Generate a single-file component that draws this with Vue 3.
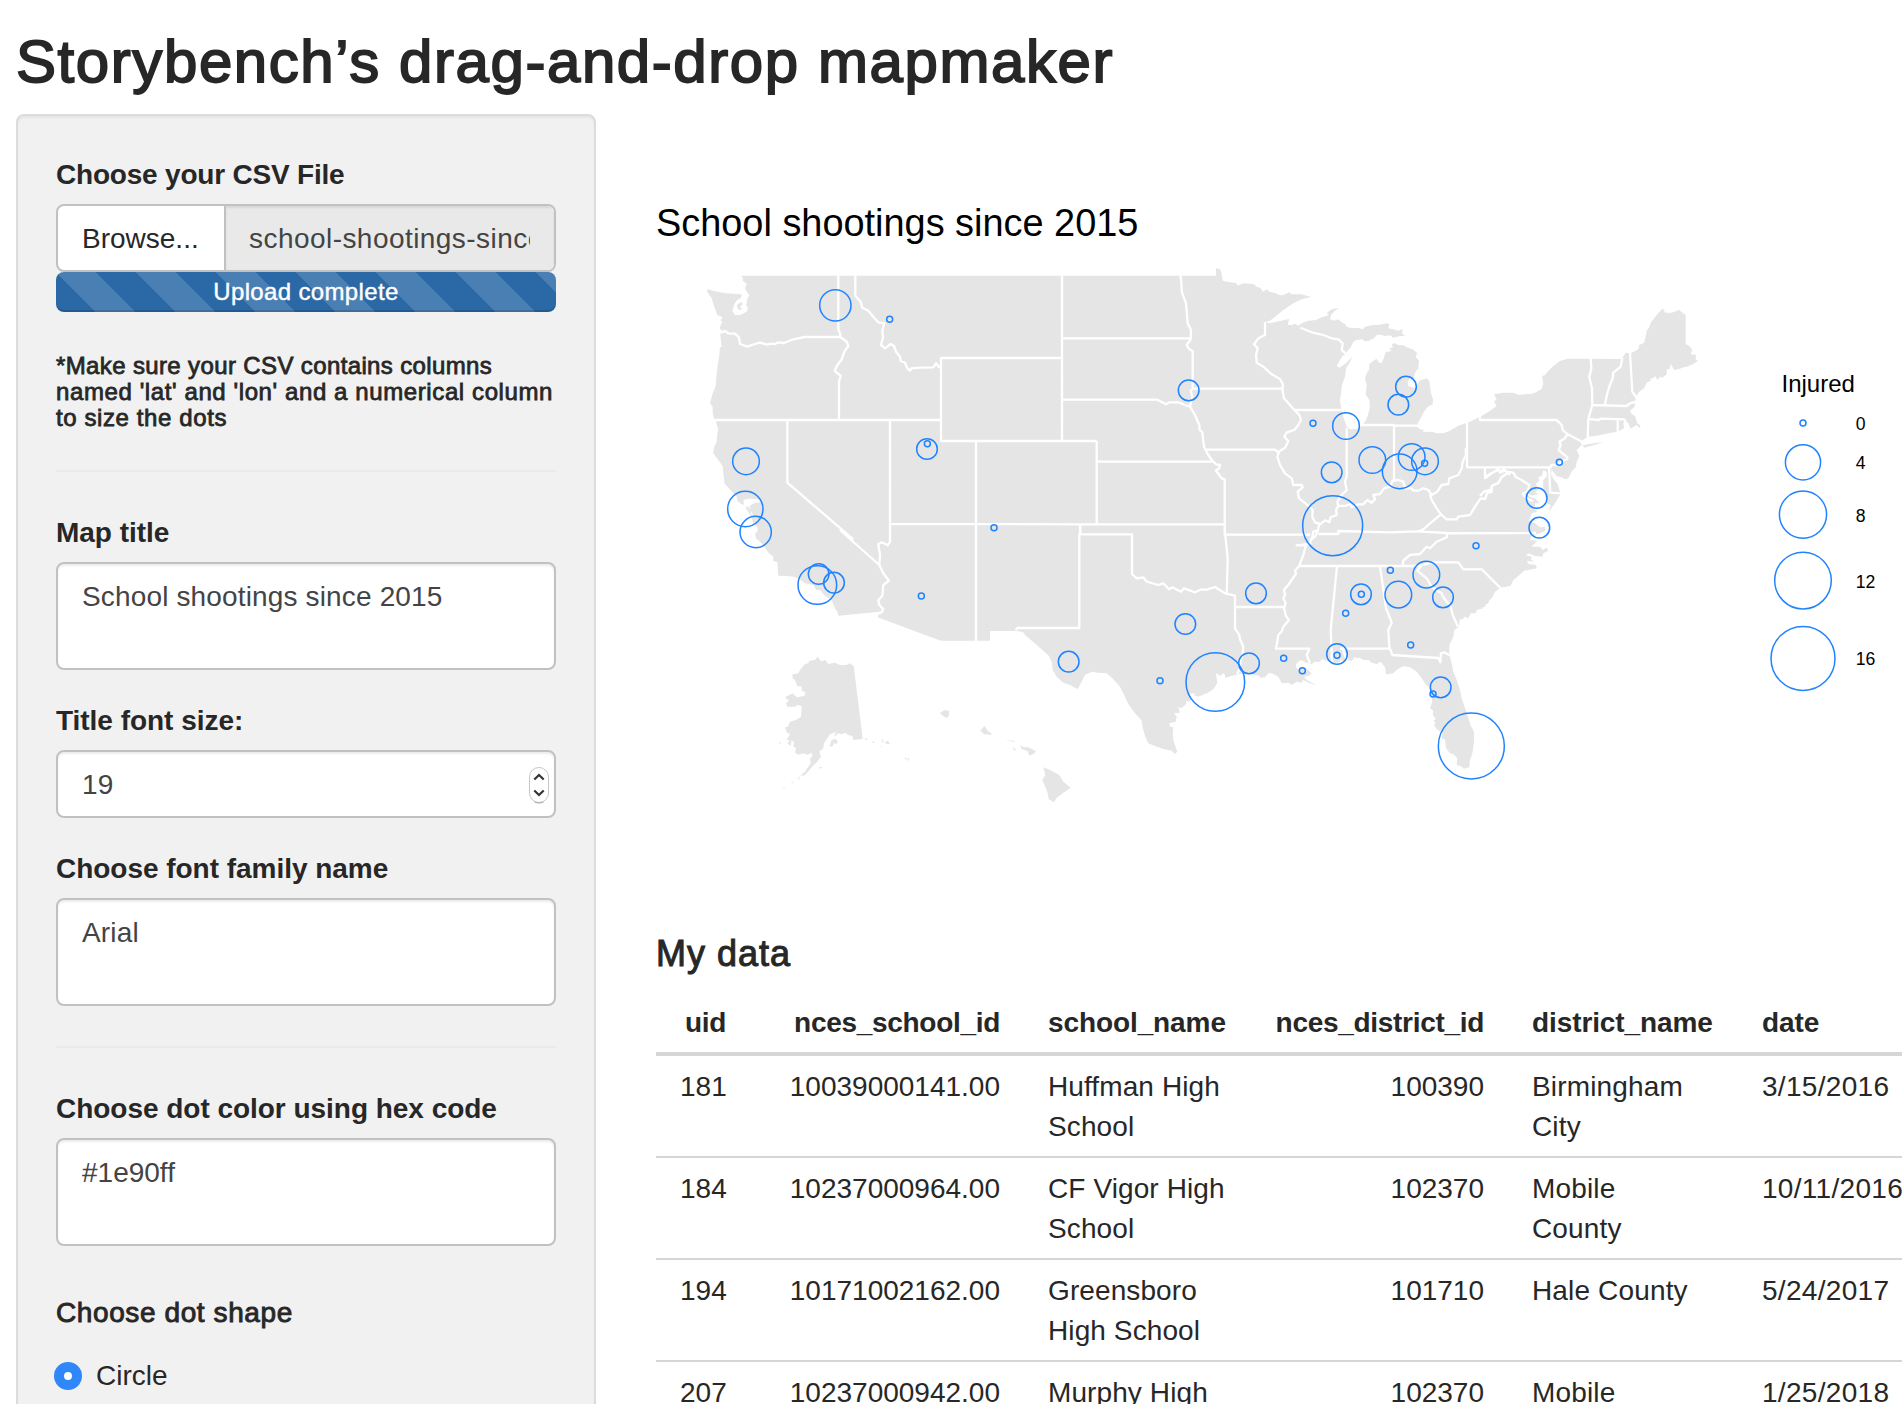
<script setup>
import { ref } from 'vue'

const title = ref('School shootings since 2015')
const fontSize = ref(19)
const family = ref('Arial')
const dotColor = ref('#1e90ff')

// Map geometry is kept per tile: each tile has an origin, and its points are in thirds of a unit.
const tiles = {
  A: [690, 260], B: [960, 260], C: [1230, 260], D: [1480, 290],
  E: [690, 530], F: [980, 530], G: [1260, 530]
}
const pts = (tile, text) => text.trim().split(/\s+/).map((p) => {
  const [x, y] = p.split(',').map(Number)
  return `${(tiles[tile][0] + x / 3).toFixed(1)} ${(tiles[tile][1] + y / 3).toFixed(1)}`
}).join('L')

const mainland = 'M' + [
  pts('A', '52,87 68,92 98,98 125,101 145,101 156,105 152,114 141,121 133,133 127,153 135,165 150,165 163,159 172,153 173,141 168,136 171,128 170,120 178,106 170,95 165,85 170,72 158,62 158,54 153,47 840,47'),
  pts('B', '768,47 768,25 780,27 785,42 788,62 805,66 828,69 833,75'),
  pts('C', '22,77 40,70 70,72 80,80 92,84 98,95 112,88 118,95 135,99 150,106 160,105 178,97 185,103 215,103 235,109 245,110 215,118 190,130 160,150 135,170 120,182 106,186 120,190 150,183 178,177 173,194 185,195 195,191 205,197 215,190 235,182 258,180 275,172 298,165 290,159 305,148 327,143 315,152 303,165 300,178 312,182 325,178 335,187 345,192 350,200 360,203 385,204 398,208 405,200 430,195 450,194 472,190 478,193 475,205 490,208 505,212 518,207 516,220 526,227 510,228 490,233 480,226 462,228 455,224 440,225 432,235 415,243 402,243 398,238 380,240 370,245 362,262 355,270 345,283 338,287 328,303 320,318 328,323 345,312 352,305 367,290 358,310 348,325 345,350 336,375 333,400 330,420 333,445 338,465 345,485 350,500 360,508 380,507 395,497 408,480 415,462 420,440 418,420 407,403 410,375 405,355 410,340 417,330 418,312 430,302 440,296 447,308 455,308 462,293 465,280 470,275 485,274 478,265 489,262 485,252 495,250 505,255 520,256 530,262 548,268 562,280 557,290 567,302 565,325 555,338 552,355 540,355 533,365 535,378 552,384 560,378 568,362 590,355 598,363 603,400 609,418 608,433 593,440 580,458 572,475 563,490 560,500 570,508 582,510 578,516 605,515 620,520 640,520 660,512 685,497 720,485 750,470 780,453 793,443'),
  pts('D', '50,347 42,335 50,328 42,313 70,308 100,308 115,314 150,312 165,308 185,297 190,280 186,258 195,255 205,243 220,228 240,213 262,206 330,206 425,207 437,188 450,190 462,185 475,178 478,165 492,158 496,145 500,122 508,112 512,98 530,75 548,55 556,68 575,68 597,60 617,75 617,162 628,168 637,180 632,192 648,195 647,207 654,213 640,222 620,230 610,232 600,236 582,240 573,222 568,238 560,238 560,253 547,263 540,260 533,270 525,258 518,266 512,264 512,272 500,278 492,295 478,305 467,320 466,335 464,350 450,362 455,372 465,378 472,400 482,408 478,414 470,405 452,416 445,400 435,392 430,398 432,415 412,425 385,430 350,437 325,440 312,448 300,460 307,463 290,480 298,497 290,515 288,530 275,545 265,565 255,568 245,562 230,558 215,540 213,552 222,570 232,580 240,605 240,615 225,640 207,665 212,645 200,640 203,630 195,622 202,608 190,605 190,570 200,560 200,546 190,541 186,557 175,562 178,573 168,580 173,600 166,605 175,612 155,617 142,610 148,620 165,625 180,640 165,640 165,650 155,650 172,665 155,670 150,688 145,690 165,700 180,712 195,710 197,722 180,730 155,737 150,750 170,752 155,770 180,770 188,780 200,773 205,782 190,790 188,800 165,798 145,790 138,796 155,800 153,808 162,815 140,812 145,822 168,825 170,835 145,840 132,842 115,858 100,870 92,887 62,893 45,905 35,925 20,935 15,950 3,955'),
  pts('G', '705,187 690,207 683,222 675,222 670,235 650,240 648,250 632,250 625,265 614,260 605,270 600,265 597,290 583,300 580,320 568,345 568,375 575,400 580,425 590,450 600,480 605,505 615,535 625,565 633,588 642,605 642,640 637,670 630,690 628,712 612,716 602,708 590,705 592,685 580,672 570,670 558,655 555,628 545,625 548,608 530,598 522,585 527,580 520,572 528,567 518,555 520,542 510,535 517,515 512,490 508,470 500,467 485,445 470,425 450,412 430,408 410,420 400,430 378,433 375,412 362,395 350,402 335,398 325,390 310,390 300,383 290,385 285,380 275,392 260,390 255,397 240,388 242,395 232,398 215,400 200,392 185,388 180,396 165,395 155,402 140,398 122,390 108,402 108,412 115,420 130,412 138,415 155,430 146,437 132,440 140,450 172,467 150,460 130,450 125,458 110,455 95,465 85,458 65,460 55,440 35,430 25,430 15,442 0,443'),
  pts('F', '838,437 810,432 795,428 778,432 755,438 735,443 735,433 728,430 722,438 708,430 712,460 700,478 680,490 655,500 640,495 648,488 628,492 632,508 630,515 618,512 618,522 605,535 595,532 600,548 582,550 590,560 587,575 568,580 570,590 580,592 578,610 580,630 588,655 592,665 585,672 575,662 550,657 525,648 505,640 495,618 490,600 484,570 465,550 445,522 430,490 420,470 400,448 380,430 355,428 335,425 315,435 305,455 293,477 270,465 250,458 230,440 218,420 215,395 207,378 190,362 170,345 150,328 135,315 130,307 110,303 30,303 30,332 0,332'),
  pts('E', '752,332 563,262 570,245 445,257 442,243 436,238 425,210 405,198 390,180 378,180 370,165 345,160 325,146 312,140 290,138 265,137 262,97 250,93 250,80 235,68 222,48 210,35 198,25 195,12 203,3'),
  pts('A', '203,803 190,790 182,768 168,745 170,737 184,750 182,762 190,768 178,738 195,728 210,727 205,718 175,716 160,720 162,735 150,730 142,722 140,710 105,672 103,665 100,640 98,618 85,600 70,580 72,562 80,545 82,520 85,510 78,485 72,475 68,460 68,440 60,430 68,400 77,378 80,340 84,310 88,285 90,262 95,262 90,215 97,212 88,205 97,185 90,180 97,176 95,170 82,165 73,140 65,115 52,97')
].join('L') + 'Z'

const shape = (tile, text) => 'M' + pts(tile, text) + 'Z'
const islands = [
  shape('A', '140,135 155,125 158,133 150,140 157,148 145,150'),
  shape('D', '308,466 345,459 370,457 340,466 312,473'),
  shape('E', '383,380 375,390 358,392 355,400 345,402 330,420 325,430 307,433 308,445 315,450 322,468 335,470 335,482 347,487 343,498 320,502 308,490 285,502 297,512 288,520 292,530 315,530 322,525 335,528 333,560 318,570 300,575 293,590 285,592 290,605 285,605 300,612 290,630 300,632 292,640 302,648 305,630 312,637 310,650 318,653 315,668 325,674 340,670 352,674 365,668 367,680 360,685 362,700 345,725 325,742 330,746 350,730 365,712 383,693 393,680 388,665 400,655 402,640 420,613 438,605 432,620 445,610 455,613 465,608 475,615 487,618 490,630 518,627 491,408 478,400 470,405 450,405 435,398 415,402 406,390 393,394'),
  shape('E', '425,630 435,626 443,634 440,642 432,640 427,650 418,648'),
  shape('E', '265,640 270,636 273,641'), shape('E', '302,759 312,754 308,760'),
  shape('E', '278,776 285,770 283,776'), shape('E', '322,745 335,735 340,738 328,748'),
  shape('E', '523,627 533,625 530,631'), shape('E', '545,632 557,638 550,640'),
  shape('E', '575,624 581,635 577,638'), shape('E', '585,637 594,632 600,642 588,641'),
  shape('E', '568,647 575,650 570,651'), shape('E', '640,681 650,686 648,690'),
  shape('E', '652,685 657,684 657,697'), shape('E', '387,711 397,711 392,717'),
  shape('E', '750,550 755,545 765,540 777,543 777,558 768,564 760,558'),
  shape('E', '870,600 876,598 884,588 891,600 903,614 884,613'),
  shape('F', '0,600 6,598 12,588 20,600 35,611 33,616 25,612 12,613'),
  shape('F', '75,630 105,633 103,636'), shape('F', '98,652 108,658 103,663'),
  shape('F', '120,645 130,652 145,652 168,664 163,670 148,677 143,664 125,657'),
  shape('F', '190,712 215,722 238,735 250,755 272,773 245,792 230,803 222,817 206,808 202,785 187,750 196,735'),
  shape('E', '283,169 288,169 287,172')
].join('')

const line = (tile, text) => 'M' + pts(tile, text)
const borders = [
  line('A', '445,44 445,208 450,220 452,232 470,245 475,258 463,275 455,298 440,318 434,332 442,340 452,347 447,365 447,480'),
  line('A', '88,217 97,217 105,213 115,220 135,221 147,232 150,252 172,260 195,252 210,248 232,254 242,251 255,252 265,247 282,249 310,238 345,231 450,231'),
  line('A', '74,480 753,480'),
  line('A', '496,44 496,107 512,125 517,143 535,152 550,170 565,187 583,190 577,212 579,232 573,255 585,265 602,252 612,258 618,275 630,290 632,303 645,308 652,325 660,332 664,325 690,323 730,322 738,310 748,322 753,324'),
  line('A', '753,480 753,294 1116,294'), line('A', '753,480 753,543 1220,543'),
  line('A', '292,480 292,668 490,838'), line('A', '600,480 600,848'),
  line('A', '600,792 1170,793 1604,793'),
  line('B', '48,543 48,840'), line('B', '306,44 306,543'), line('B', '306,235 692,235'),
  line('B', '306,418 592,419 605,426 618,433 628,427 655,427 675,435 690,440'),
  line('B', '410,543 410,793'), line('B', '410,605 757,605'),
  line('B', '661,44 664,65 665,95 678,130 683,190 693,210 692,238 680,255 688,268 698,273 698,386 692,392 697,410 690,440 705,465 718,495 719,510 727,517 732,560 742,580 755,600 768,613 780,615 778,624 768,632 785,655 794,658 794,826'),
  line('B', '698,386 968,386'), line('B', '737,569 945,569 955,578'),
  line('B', '360,793 360,822'), line('B', '794,824 1050,824'),
  line('C', '105,186 105,225 85,235 72,253 83,265 78,285 80,308 100,320 125,343 150,357 158,372 158,395 162,415 180,435 193,450 208,465 213,480 205,495 193,510 170,517 163,530 175,543 165,563 148,574 142,590 150,615 165,640 185,655 190,675 215,675 218,682 203,695 207,715 230,733 248,750 247,770 255,787 268,791 263,812 250,815 245,840'),
  line('C', '193,450 334,450'), line('C', '350,505 350,650 345,665 350,690 335,705 322,725 325,740'),
  line('C', '388,495 492,495 492,665'), line('C', '492,497 562,497'),
  line('C', '255,787 270,793 285,781 298,787 302,772 320,765 318,750 325,737 345,738 360,732 365,742 385,733 400,733 412,720 425,728 435,717 430,705 450,702 462,685 480,680 488,662 505,660 520,665 525,685 545,685 550,692 565,692 580,685 595,690 605,705 622,695 635,675 655,672 658,655 685,645 695,625 698,605 708,585 707,565'),
  line('C', '711,483 711,622 960,622'), line('C', '600,703 605,720 620,745 633,763 650,778 680,778 685,770 720,765 735,740 752,715 765,717 775,690 785,695 785,678 805,668 815,650 835,638'),
  line('C', '765,622 765,655 785,640 805,628 810,638 825,632 840,645'),
  line('C', '633,763 600,790 580,808 560,816'), line('C', '265,822 325,822 325,813 480,817 560,814 650,819 840,820'),
  line('C', '211,203 245,217 280,225 305,235 325,238 338,250 335,270 347,280'),
  line('C', '750,468 750,480 980,480 995,495'),
  line('D', '228,390 245,405 248,420 262,432 309,457'),
  line('D', '262,432 255,445 238,455 242,465 236,480 262,502 262,507 245,513 235,525 215,525 207,533'),
  line('D', '0,532 215,532'), line('D', '207,532 211,608 242,610'),
  line('D', '332,204 334,235 328,262 336,295 337,345 325,388 323,442'),
  line('D', '427,204 422,230 400,248 398,265 388,290 382,310 375,343'),
  line('D', '337,345 440,348 450,340 468,335'), line('D', '450,187 457,305 469,322'),
  line('D', '328,387 358,390 360,386 433,388 440,402'), line('D', '413,390 413,427'),
  line('D', '15,532 15,562 33,550 55,540 60,545 72,538 80,545 100,548 108,562 125,570 148,585 143,603 128,612 140,625 160,634'),
  line('D', '0,618 15,602 30,608 35,588 55,580 65,562 75,555 84,545'),
  line('G', '562,10 828,9'),
  line('E', '568,105 450,0'), line('E', '600,0 600,35 593,46 575,37 565,42 570,75 568,105 580,130 597,152 580,165 577,198 565,210 568,225 580,238 575,247 565,250'),
  line('E', '858,-10 858,334'),
  line('F', '107,300 112,294 298,294 298,13 456,13 456,132 470,145 490,142 500,155 535,165 550,160 567,178 577,172 603,185 612,175 645,187 665,178 680,179 705,171 735,190 765,197 765,295 778,315 780,328 790,350 788,375 782,390 780,412 772,432'),
  line('F', '734,0 743,85 740,192'), line('F', '301,-17 301,13'), line('F', '765,231 912,231'),
  line('F', '736,-8 733,-2'),
  line('G', '175,0 165,20 153,28 150,42 110,46 138,46 130,75 118,107 105,122 108,132 98,145 85,165 72,180 75,195 70,205 77,220 72,235 78,258 87,270 70,290 65,305 55,315 50,345 48,356 148,356 140,375 150,400'),
  line('G', '118,108 475,108 520,97 595,97 610,118 665,118 722,175'),
  line('G', '231,108 212,300 216,398'), line('G', '360,108 378,235 390,265 395,278 385,300 388,350 397,375 535,384 541,397 543,370 553,367 568,376'),
  line('G', '240,356 390,356'), line('G', '250,356 252,370 262,392'),
  line('G', '485,106 472,122 500,145 515,172 545,190 550,202 572,230 578,255 594,290'),
  line('G', '428,105 430,92 450,75 480,72 500,50 510,55 530,35 560,22 562,9')
].join('')

const dotData = [
  ['A', 436, 136, 47], ['A', 599, 178, 9], ['A', 711, 567, 31], ['A', 712, 551, 9], ['A', 168, 604, 40],
  ['A', 166, 747, 53], ['A', 197, 816, 47], ['B', 686, 391, 31], ['B', 102, 803, 9], ['C', 528, 380, 31],
  ['C', 505, 434, 31], ['C', 249, 490, 9], ['C', 348, 498, 40], ['C', 305, 637, 31], ['C', 427, 600, 40],
  ['C', 509, 634, 52], ['C', 545, 591, 40], ['C', 585, 604, 40], ['C', 584, 610, 9], ['C', 308, 797, 90],
  ['D', 238, 517, 9], ['D', 170, 624, 31], ['D', 178, 713, 31], ['E', 382, 165, 58], ['E', 386, 132, 31],
  ['E', 432, 158, 31], ['E', 694, 198, 9], ['F', 266, 395, 31], ['F', 616, 282, 31], ['F', 540, 452, 9],
  ['F', 706, 456, 88], ['F', 807, 400, 31], ['F', 828, 190, 31], ['G', 71, 385, 9], ['G', 127, 422, 9],
  ['G', 231, 372, 31], ['G', 231, 376, 9], ['G', 303, 193, 31], ['G', 304, 193, 9], ['G', 257, 250, 9],
  ['G', 391, 121, 9], ['G', 415, 194, 40], ['G', 499, 134, 40], ['G', 549, 202, 31], ['G', 452, 345, 9],
  ['G', 648, 47, 9], ['G', 542, 472, 31], ['G', 519, 492, 9], ['G', 634, 648, 99]
]
const dots = dotData.map(([t, x, y, r]) => ({ x: tiles[t][0] + x / 3, y: tiles[t][1] + y / 3, r: r / 3 }))

const legend = [
  { label: 0, y: 423, r: 3 },
  { label: 4, y: 462.3, r: 17.6 },
  { label: 8, y: 514.6, r: 23.6 },
  { label: 12, y: 580.6, r: 28.3 },
  { label: 16, y: 658.4, r: 32 }
]

const columns = [
  { key: 'uid', width: 94, num: true },
  { key: 'nces_school_id', width: 274, num: true },
  { key: 'school_name', width: 226 },
  { key: 'nces_district_id', width: 258, num: true },
  { key: 'district_name', width: 230 },
  { key: 'date', width: 199 }
]
const rows = [
  ['181', '10039000141.00', 'Huffman High School', '100390', 'Birmingham City', '3/15/2016'],
  ['184', '10237000964.00', 'CF Vigor High School', '102370', 'Mobile County', '10/11/2016'],
  ['194', '10171002162.00', 'Greensboro High School', '101710', 'Hale County', '5/24/2017'],
  ['207', '10237000942.00', 'Murphy High School', '102370', 'Mobile County', '1/25/2018']
]
</script>

<template>
  <div class="page">
    <h2 class="page-title">Storybench’s drag-and-drop mapmaker</h2>
    <div class="layout">
      <form class="well">
        <label class="label tight">Choose your CSV File</label>
        <div class="file-group">
          <span class="browse">Browse...</span>
          <div class="file-name"><span>school-shootings-since-2015.csv</span></div>
        </div>
        <div class="progress">Upload complete</div>
        <h6 class="note"><span>*Make sure your CSV contains columns</span> named 'lat' and 'lon' and a numerical column to size the dots</h6>
        <hr />
        <label class="label">Map title</label>
        <div class="control area">{{ title }}</div>
        <label class="label">Title font size:</label>
        <div class="control number">
          <span>{{ fontSize }}</span>
          <svg class="spinner" width="22" height="40" viewBox="0 0 22 40">
            <rect x="1.5" y="2.5" width="19" height="35" rx="9.5" fill="#fff" stroke="#c6c6c6" />
            <path d="M6.5 37.2Q11 39 15.5 37.2" fill="none" stroke="#aaa" />
            <path d="M6.3 14.5L11 10L15.7 14.5M6.3 25.5L11 30L15.7 25.5" fill="none" stroke="#333" stroke-width="2.2" />
          </svg>
        </div>
        <label class="label">Choose font family name</label>
        <div class="control area">{{ family }}</div>
        <hr />
        <label class="label">Choose dot color using hex code</label>
        <div class="control area hex">{{ dotColor }}</div>
        <h5 class="shape-title">Choose dot shape</h5>
        <div class="radio"><i class="radio-mark"></i><span>Circle</span></div>
      </form>

      <main class="main">
        <svg class="plot" width="1246" height="820" viewBox="656 114 1246 820">
          <text class="plot-title" x="656" y="236">{{ title }}</text>
          <path class="land" :d="mainland" />
          <path class="land" :d="islands" />
          <path class="borders" :d="borders" />
          <circle v-for="(d, i) in dots" :key="i" class="dot" :cx="d.x" :cy="d.y" :r="d.r" />
          <text class="legend-title" x="1781.5" y="391.7">Injured</text>
          <g v-for="l in legend" :key="l.label">
            <circle class="dot" cx="1803" :cy="l.y" :r="l.r" />
            <text class="legend-label" x="1855.8" :y="l.y + 7">{{ l.label }}</text>
          </g>
        </svg>
        <h4 class="data-title">My data</h4>
        <table class="data">
          <colgroup>
            <col v-for="c in columns" :key="c.key" :style="{ width: c.width + 'px' }" />
          </colgroup>
          <thead>
            <tr><th v-for="c in columns" :key="c.key" :class="{ num: c.num }">{{ c.key }}</th></tr>
          </thead>
          <tbody>
            <tr v-for="r in rows" :key="r[0]">
              <td v-for="(v, i) in r" :key="i" :class="{ num: columns[i].num }">{{ v }}</td>
            </tr>
          </tbody>
        </table>
      </main>
    </div>
  </div>
</template>

<style>
body { margin: 0; background: #fff; }
</style>

<style scoped>
.page {
  box-sizing: border-box;
  width: 1902px;
  height: 1404px;
  padding: 29px 0 0 16px;
  overflow: hidden;
  display: flex;
  flex-direction: column;
  font-family: "Liberation Sans", Arial, sans-serif;
  font-size: 28px;
  line-height: 40px;
  color: #272727;
}
h2, h4, h5, h6 { margin: 0; font-weight: 400; }
.page-title {
  margin-bottom: 19px;
  font-size: 60px;
  line-height: 66px;
  letter-spacing: 1.58px;
  white-space: nowrap;
  -webkit-text-stroke: 1.8px #272727;
}
.layout { display: flex; align-items: flex-start; gap: 60px; }
.well {
  box-sizing: border-box;
  flex: none;
  width: 580px;
  height: 1400px;
  padding: 38px;
  border: 2px solid #dcdcdc;
  border-radius: 8px;
  background: #f1f1f1;
  box-shadow: inset 0 2px 2px rgba(0, 0, 0, .05);
}
.label {
  display: block;
  height: 39px;
  padding-top: 1px;
  margin-bottom: 10px;
  font-weight: 700;
  letter-spacing: -.03px;
}
.tight { letter-spacing: -.2px; }
.file-group {
  display: flex;
  box-sizing: border-box;
  height: 68px;
  border: 2px solid #c1c1c1;
  border-radius: 8px;
  overflow: hidden;
  background: #fff;
}
.browse {
  box-sizing: border-box;
  flex: none;
  width: 168px;
  padding: 13px 0 0 24px;
  border-right: 2px solid #c1c1c1;
}
.file-name {
  flex: 1;
  min-width: 0;
  padding: 13px 24px 0 23px;
  background: #e9e9e9;
  box-shadow: inset 0 2px 2px rgba(0, 0, 0, .075);
  color: #444;
}
.file-name span { display: block; overflow: hidden; white-space: nowrap; letter-spacing: .45px; }
.progress {
  height: 40px;
  border-radius: 8px;
  background-color: #2a69a6;
  background-image: linear-gradient(45deg, rgba(255, 255, 255, .15) 25%, transparent 25%, transparent 50%, rgba(255, 255, 255, .15) 50%, rgba(255, 255, 255, .15) 75%, transparent 75%);
  background-size: 80px 80px;
  box-shadow: inset 0 -2px 0 rgba(0, 0, 0, .15);
  color: #fff;
  font-size: 24px;
  letter-spacing: .35px;
  text-align: center;
  -webkit-text-stroke: .4px #fff;
}
.note {
  margin-top: 41px;
  font-size: 24px;
  line-height: 26px;
  letter-spacing: .6px;
  -webkit-text-stroke: .8px #272727;
}
.note span { letter-spacing: .37px; }
hr { margin: 40px 0; border: 0; border-top: 2px solid #e9e9e9; }
.note + hr { margin-top: 39px; }
.control {
  box-sizing: border-box;
  height: 68px;
  margin-bottom: 30px;
  padding: 13px 23px 11px 24px;
  border: 2px solid #c1c1c1;
  border-radius: 8px;
  background: #fff;
  box-shadow: inset 0 2px 2px rgba(0, 0, 0, .075);
  color: #444;
  letter-spacing: .15px;
}
.area { height: 108px; }
.number { display: flex; justify-content: space-between; padding-right: 4px; }
.spinner { margin-top: 0; }
.hex { letter-spacing: 0; }
.shape-title {
  margin: 51px 0 28px;
  line-height: 31px;
  letter-spacing: .6px;
  font-size: 28px;
  -webkit-text-stroke: .9px #272727;
}
.radio { display: flex; gap: 14px; margin-left: -2px; }
.radio-mark {
  box-sizing: border-box;
  width: 28px;
  height: 28px;
  margin-top: 6px;
  border: 10px solid #3087fa;
  border-radius: 50%;
  background: #fff;
}
.main { flex: none; width: 1281px; }
.plot { display: block; }
.plot-title { font-size: 37.9px; fill: #000; }
.legend-title { font-size: 24px; fill: #000; }
.legend-label { font-size: 17.6px; fill: #000; }
.land { fill: #e5e5e5; }
.borders { fill: none; stroke: #fff; stroke-width: 2.3; stroke-linejoin: round; }
.dot { fill: none; stroke: #2083ff; stroke-width: 1.5; }
.data-title {
  font-size: 36px;
  line-height: 40px;
  letter-spacing: 1px;
  -webkit-text-stroke: 1px #272727;
}
.data {
  width: 1281px;
  margin-top: 18px;
  border-spacing: 0;
  table-layout: fixed;
}
.data th, .data td {
  padding: 11px 24px 9px;
  text-align: left;
  vertical-align: top;
}
.data td:nth-child(3) { padding-right: 20px; letter-spacing: .1px; }
.data td:nth-child(5) { padding-right: 34px; letter-spacing: .15px; }
.data td:last-child { padding-right: 0; letter-spacing: .3px; }
.data th { border-bottom: 4px solid #d6d6d6; letter-spacing: -.1px; white-space: nowrap; }
.data tr + tr td { border-top: 2px solid #d6d6d6; }
.data .num { text-align: right; }
.data th.num { letter-spacing: -.3px; }
</style>
